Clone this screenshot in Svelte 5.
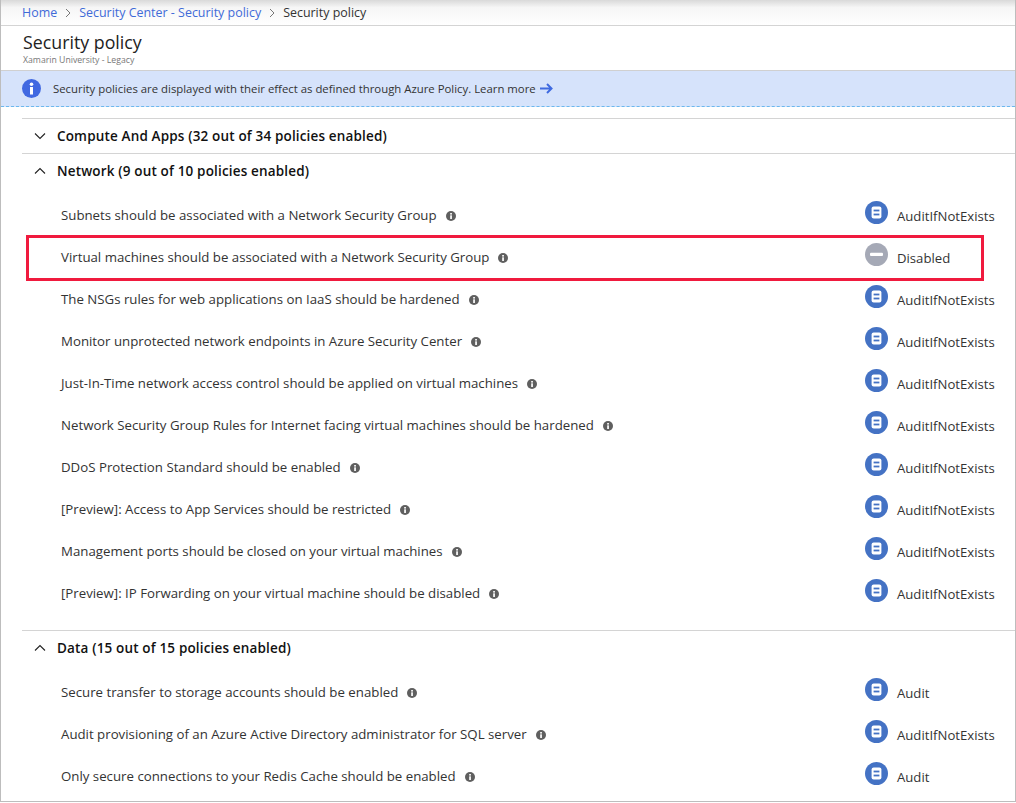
<script>
  const network = [
    ['Subnets should be associated with a Network Security Group', 'AuditIfNotExists'],
    ['Virtual machines should be associated with a Network Security Group', 'Disabled'],
    ['The NSGs rules for web applications on IaaS should be hardened', 'AuditIfNotExists'],
    ['Monitor unprotected network endpoints in Azure Security Center', 'AuditIfNotExists'],
    ['Just-In-Time network access control should be applied on virtual machines', 'AuditIfNotExists'],
    ['Network Security Group Rules for Internet facing virtual machines should be hardened', 'AuditIfNotExists'],
    ['DDoS Protection Standard should be enabled', 'AuditIfNotExists'],
    ['[Preview]: Access to App Services should be restricted', 'AuditIfNotExists'],
    ['Management ports should be closed on your virtual machines', 'AuditIfNotExists'],
    ['[Preview]: IP Forwarding on your virtual machine should be disabled', 'AuditIfNotExists']
  ];
  const data = [
    ['Secure transfer to storage accounts should be enabled', 'Audit'],
    ['Audit provisioning of an Azure Active Directory administrator for SQL server', 'AuditIfNotExists'],
    ['Only secure connections to your Redis Cache should be enabled', 'Audit']
  ];
</script>

{#snippet row(item)}
  <div class="row" class:marked={item[1] === 'Disabled'}>
    <div class="policy">
      <span>{item[0]}</span>
      <svg class="info" viewBox="0 0 10 10"><circle cx="5" cy="5" r="5" fill="#5f5f5f"/><rect x="4.2" y="4.3" width="1.7" height="3.7" fill="#fff"/><rect x="4.2" y="2" width="1.7" height="1.6" fill="#fff"/></svg>
    </div>
    <div class="effect">
      {#if item[1] === 'Disabled'}
        <svg class="badge" viewBox="0 0 23 23"><circle cx="11.5" cy="11.5" r="11.5" fill="#a5a9b6"/><rect x="5" y="9.8" width="13" height="3.2" rx="1" fill="#fff"/></svg>
      {:else}
        <svg class="badge" viewBox="0 0 23 23"><circle cx="11.5" cy="11.5" r="11.5" fill="#4472c4"/><rect x="6.6" y="5.6" width="9.8" height="11.8" rx="2" fill="#fff"/><rect x="8.6" y="8.6" width="5.8" height="1.8" fill="#4472c4"/><rect x="8.6" y="12.6" width="5.8" height="1.8" fill="#4472c4"/></svg>
      {/if}
      <span>{item[1]}</span>
    </div>
  </div>
{/snippet}

{#snippet chevron(up)}
  <svg class="chev" viewBox="0 0 12 8" fill="none" stroke="#222" stroke-width="1.1"><path d={up ? 'M1 6.5 6 1.5l5 5' : 'M1 1.5l5 5 5-5'}/></svg>
{/snippet}

<div class="page">
  <nav class="crumbs">
    <a href="#home">Home</a>
    <svg viewBox="0 0 6 10" fill="none" stroke="#777" stroke-width="1"><path d="M1 1l4 4-4 4"/></svg>
    <a href="#center">Security Center - Security policy</a>
    <svg viewBox="0 0 6 10" fill="none" stroke="#777" stroke-width="1"><path d="M1 1l4 4-4 4"/></svg>
    <span>Security policy</span>
  </nav>

  <header class="head">
    <h1>Security policy</h1>
    <div class="sub">Xamarin University - Legacy</div>
  </header>

  <div class="banner">
    <svg class="banner-icon" viewBox="0 0 19 19"><circle cx="9.5" cy="9.5" r="9.5" fill="#4169e1"/><rect x="8" y="8" width="3" height="7.5" fill="#fff"/><circle cx="9.5" cy="5.2" r="1.8" fill="#fff"/></svg>
    <span>Security policies are displayed with their effect as defined through Azure Policy. Learn more</span>
    <svg class="arrow" viewBox="0 0 13 11" fill="none" stroke="#3f6ae0" stroke-width="2"><path d="M0 5.5h11.5M7 1l4.5 4.5L7 10"/></svg>
  </div>

  <div class="sections">
    <section class="group">
      <div class="group-head">{@render chevron(false)}<h2>Compute And Apps (32 out of 34 policies enabled)</h2></div>
    </section>
    <section class="group net">
      <div class="group-head">{@render chevron(true)}<h2>Network (9 out of 10 policies enabled)</h2></div>
      <div class="rows">
        {#each network as item}
          {@render row(item)}
        {/each}
      </div>
    </section>
    <section class="group">
      <div class="group-head">{@render chevron(true)}<h2>Data (15 out of 15 policies enabled)</h2></div>
      <div class="rows">
        {#each data as item}
          {@render row(item)}
        {/each}
      </div>
    </section>
  </div>
</div>

<style>
  :global(body) {
    margin: 0;
    background: #fff;
  }
  .page {
    box-sizing: border-box;
    width: 1016px;
    height: 802px;
    overflow: hidden;
    border: 1px solid #bdbdbd;
    border-top: 0;
    font-family: "Open Sans", "Noto Sans", sans-serif;
    font-size: 13.25px;
    color: #333;
  }
  .crumbs {
    display: flex;
    align-items: center;
    gap: 8px;
    height: 25px;
    padding-left: 21px;
    border-bottom: 1px solid #d4d4d4;
    background: linear-gradient(#d9d9d9, #f6f6f6 30%, #fff);
    font-size: 12.45px;
  }
  .crumbs a {
    color: #3f6ad8;
    text-decoration: none;
  }
  .crumbs svg {
    width: 6px;
    height: 10px;
  }
  .head {
    height: 45px;
    padding-left: 22px;
    box-sizing: border-box;
    padding-top: 5px;
    border-bottom: 1px solid #d0d0d0;
  }
  h1 {
    margin: 0;
    font-size: 17.8px;
    font-weight: 400;
    line-height: 23px;
    color: #222;
  }
  .sub {
    font-size: 8.7px;
    line-height: 12px;
    color: #777;
  }
  .banner {
    display: flex;
    align-items: center;
    height: 35px;
    padding-left: 21px;
    background: #d6e3fb;
    border-bottom: 1px dashed #6cb8ee;
    font-size: 11.37px;
    color: #333;
  }
  .banner-icon {
    width: 19px;
    height: 19px;
    margin-right: 12px;
  }
  .arrow {
    width: 13px;
    height: 11px;
    margin-left: 4px;
  }
  .sections {
    padding: 11px 0 0 21px;
  }
  .group {
    border-top: 1px solid #d4d4d4;
  }
  .group.net {
    padding-bottom: 16px;
  }
  .group-head {
    display: flex;
    align-items: center;
    height: 34px;
  }
  .chev {
    width: 12px;
    height: 8px;
    margin-left: 12px;
    margin-right: 11px;
  }
  h2 {
    margin: 0;
    font-size: 13.5px;
    font-weight: 600;
    letter-spacing: 0.16px;
    color: #111;
  }
  .rows {
    padding-top: 6px;
  }
  .row {
    position: relative;
    display: flex;
    align-items: center;
    justify-content: space-between;
    height: 42px;
    padding-left: 39px;
  }
  .row.marked::after {
    content: "";
    position: absolute;
    left: 4px;
    top: -1px;
    width: 952px;
    height: 40px;
    border: 3px solid #f01a3e;
  }
  .policy {
    display: flex;
    align-items: center;
    gap: 9px;
  }
  .info {
    width: 10px;
    height: 10px;
    margin-top: 2px;
  }
  .effect {
    display: flex;
    align-items: center;
    gap: 9px;
    width: 150px;
    font-size: 13.15px;
  }
  .badge {
    width: 23px;
    height: 23px;
    margin-top: -6px;
  }
  .effect span {
    margin-top: 1px;
  }
</style>
